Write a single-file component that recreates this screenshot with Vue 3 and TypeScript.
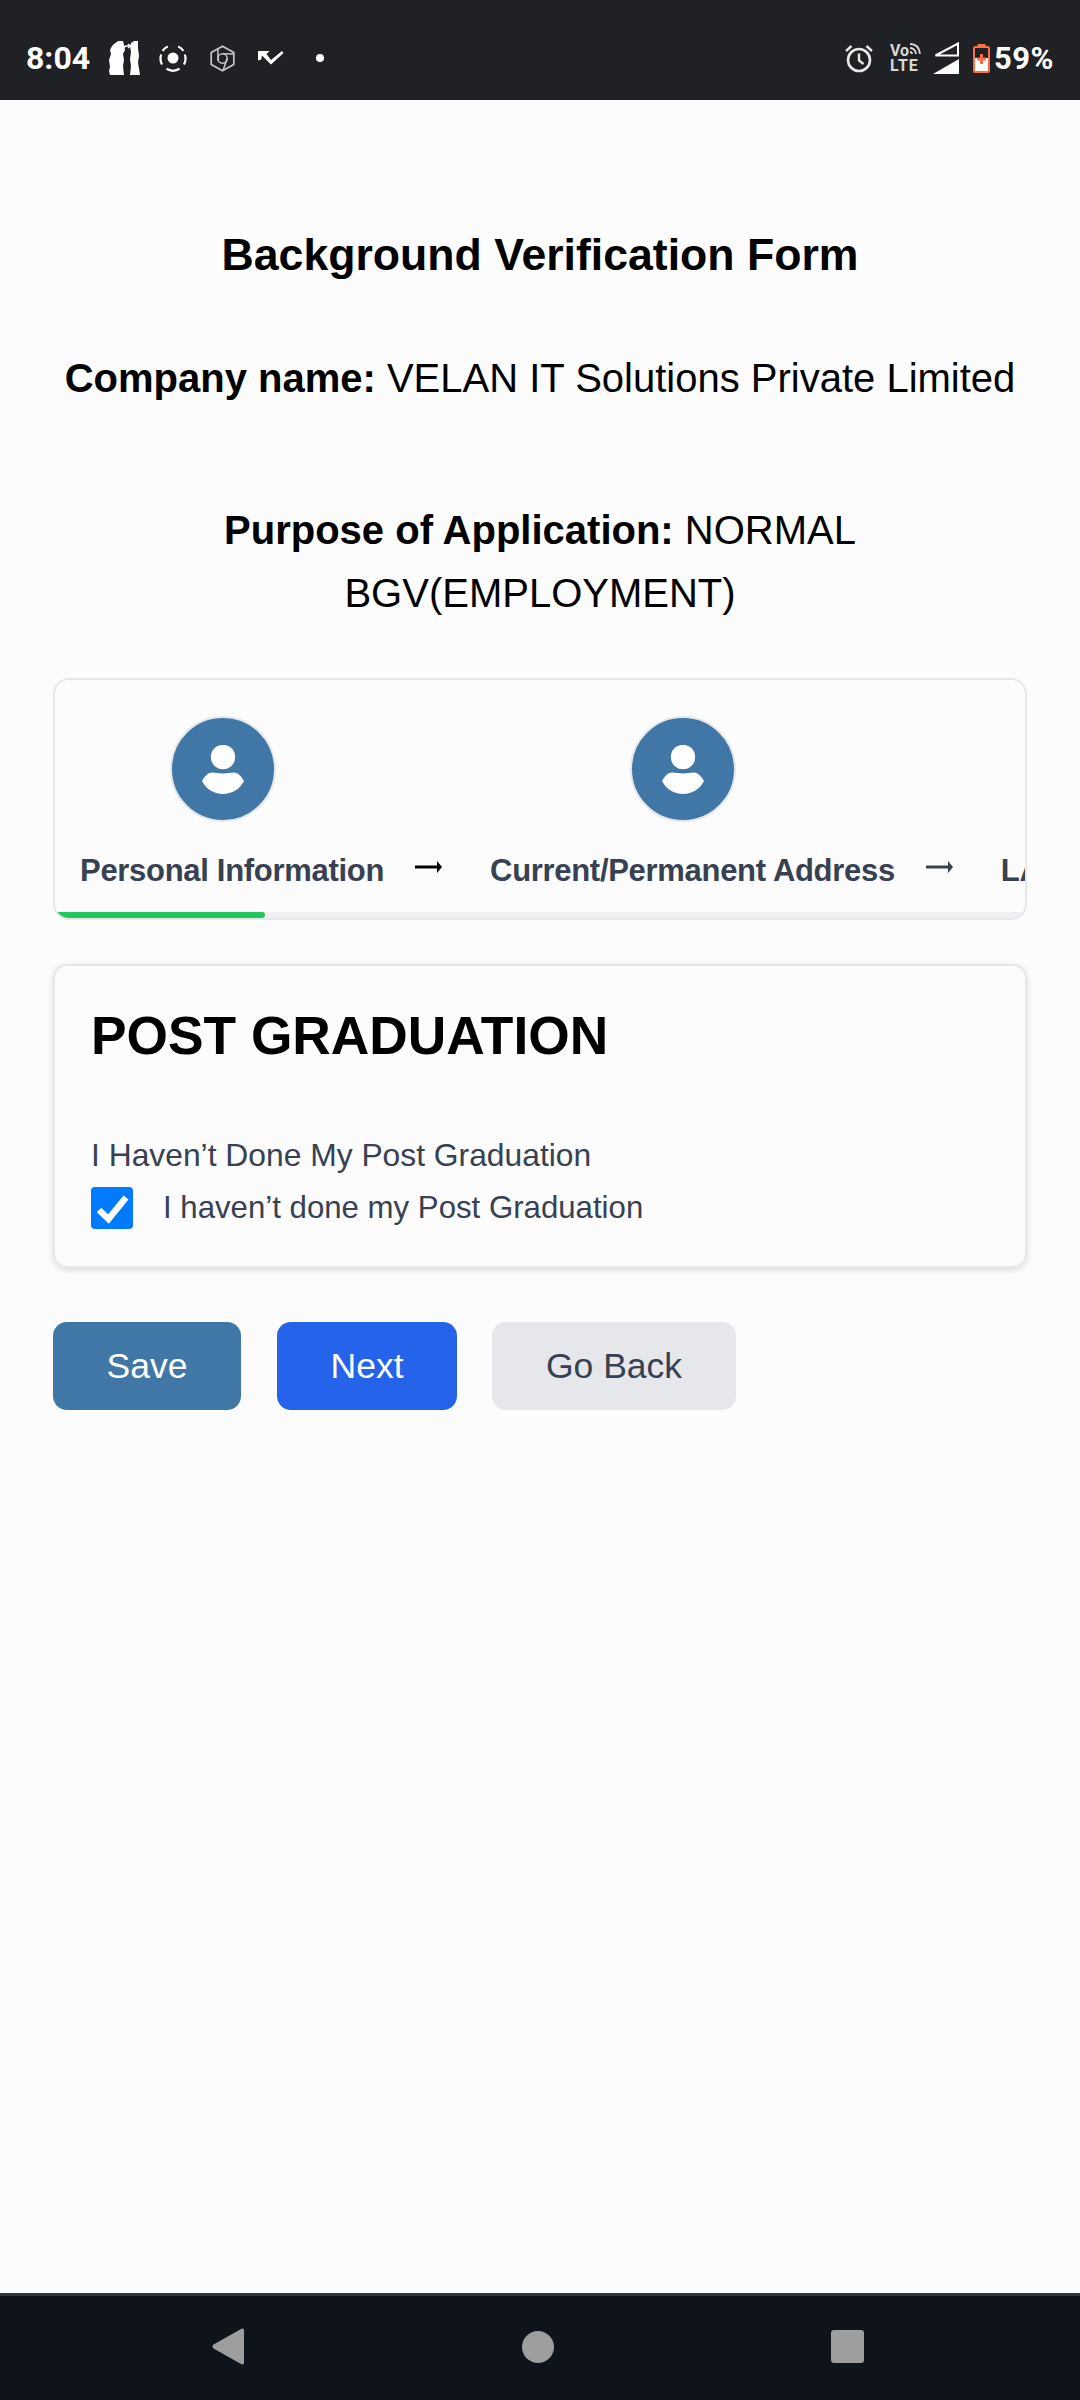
<script setup lang="ts">
const steps = [
  { label: 'Personal Information', arrowDark: true },
  { label: 'Current/Permanent Address', arrowDark: false },
];
</script>

<template>
  <div class="screen">
    <div class="status-bar">
      <div class="status-left">
        <span class="time">8:04</span>
        <svg class="ic-bottles" width="31" height="34" viewBox="0 0 31 34">
          <path d="M5 3 9 0h5l1 4 1 5-2 4 1 6-1 6 1 9H1l-1-4 1-4-1-7 2-6-1-4 2-4z" fill="#fff" />
          <path d="M22 2l3-2h4l0 7 1 8-1 6 2 13h-10l1-9-1-7 1-7-1-6z" fill="#fff" />
          <path d="M14 7q3-3 7-2M19 3l2 2-2 2" fill="none" stroke="#fff" stroke-width="1.4" />
        </svg>
        <svg class="ic-target" width="28" height="28" viewBox="0 0 28 28">
          <circle cx="14" cy="14" r="5.5" fill="#fff" />
          <path d="M3.6 6.800A12.500 12.500 0 0 1 8.800 2.600M19.200 2.600A12.500 12.500 0 0 1 24.400 6.800M25.800 10.500A12.500 12.500 0 0 1 25 20.500M20.500 24.800A12.500 12.500 0 0 1 7.500 24.800M3 20.500A12.500 12.500 0 0 1 2.200 10.500" fill="none" stroke="#fff" stroke-width="2.2" />
        </svg>
        <svg class="ic-hex" width="25" height="27" viewBox="0 0 25 27">
          <path d="M12.500 1.200 23.800 7.500V19.500L12.500 25.800 1.200 19.500V7.500Z" fill="none" stroke="#c8c8c8" stroke-width="1.7" stroke-linejoin="round" />
          <circle cx="12.500" cy="13.500" r="4.700" fill="none" stroke="#c8c8c8" stroke-width="1.500" />
          <path d="M8 3.800Q7.500 10 8.500 15.500M23.500 9 13 8.800M13 25.500 17 14" fill="none" stroke="#c8c8c8" stroke-width="1.500" />
        </svg>
        <svg class="ic-check" width="26" height="16" viewBox="0 0 26 16">
          <path d="M0 1h11.500L8.500 4 13 10 24 1 25.500 3 13 14.500 4 5.500 3.200 9.500 0 10.500Z" fill="#fff" />
        </svg>
        <span class="dot"></span>
      </div>
      <div class="status-right">
        <svg class="ic-alarm" width="28" height="29" viewBox="0 0 28 29">
          <circle cx="14" cy="16" r="11" fill="none" stroke="#e8e8e8" stroke-width="2.6" />
          <path d="M14 9.500v7l4.500 3.500M1 7 6.500 2M27 7 21.500 2" fill="none" stroke="#e8e8e8" stroke-width="2.4" />
        </svg>
        <div class="volte">
          <div class="vo">Vo<svg width="12" height="11" viewBox="0 0 12 11"><path d="M1 1q9 0 10 10M1 5q5 0 6 6M1 9q2 0 2 2" fill="none" stroke="#d8d8d8" stroke-width="1.8" /></svg></div>
          <div class="lte">LTE</div>
        </div>
        <svg class="ic-signal" width="26" height="32" viewBox="0 0 26 32">
          <path d="M25 1.500V13.500H2.500Z" fill="none" stroke="#fff" stroke-width="2" />
          <path d="M26 17V32H0Z" fill="#fff" />
        </svg>
        <svg class="ic-batt" width="17" height="29" viewBox="0 0 17 29">
          <rect x="4.500" y="0" width="8" height="3" fill="#ff6d42" />
          <rect x="1" y="3" width="15" height="25" rx="1.500" fill="#202124" stroke="#ff6d42" stroke-width="2" />
          <rect x="2" y="14" width="13" height="13" fill="#fff" />
          <path d="M8.500 10v10M4 15h9" stroke="#ff6d42" stroke-width="3" />
        </svg>
        <span class="percent">59%</span>
      </div>
    </div>

    <main class="content">
      <h1 class="title">Background Verification Form</h1>
      <p class="company"><b>Company name:</b> VELAN IT Solutions Private Limited</p>
      <p class="purpose"><b>Purpose of Application:</b> NORMAL BGV(EMPLOYMENT)</p>

      <section class="stepper">
        <div class="steps">
          <template v-for="step in steps" :key="step.label">
            <div class="step">
              <div class="avatar">
                <svg width="42" height="49" viewBox="0 0 42 49">
                  <circle cx="21" cy="12" r="12.200" fill="#fff" />
                  <path d="M0 36C3 31 6 27.500 10 27.500C14 27.500 17 28.500 21 28.500C25 28.500 28 27.500 32 27.500C36 27.500 39 31 42 36C38 44 30 49 21 49C12 49 4 44 0 36Z" fill="#fff" />
                </svg>
              </div>
              <span class="step-label">{{ step.label }}</span>
            </div>
            <svg class="arrow" :class="{ dark: step.arrowDark }" width="27" height="12" viewBox="0 0 27 12">
              <path d="M0 4.500h22V0l5 6-5 6V7.500H0Z" fill="currentColor" />
            </svg>
          </template>
          <span class="step-label cut">LAST EMPLOYMENT</span>
        </div>
        <div class="track"><div class="fill"></div></div>
      </section>

      <section class="card">
        <h2 class="card-title">POST GRADUATION</h2>
        <div class="field-label">I Haven’t Done My Post Graduation</div>
        <label class="check-row">
          <span class="check-box">
            <input type="checkbox" class="check" checked />
            <svg class="tick" width="42" height="42" viewBox="0 0 42 42">
              <path d="M8 23 17.500 32 35 10.500" fill="none" stroke="#fff" stroke-width="6.500" />
            </svg>
          </span>
          <span>I haven’t done my Post Graduation</span>
        </label>
      </section>

      <div class="actions">
        <button class="btn save">Save</button>
        <button class="btn next">Next</button>
        <button class="btn back">Go Back</button>
      </div>
    </main>

    <nav class="nav-bar">
      <svg width="32" height="37" viewBox="0 0 32 37"><path d="M29.500 0.800Q32 -0.500 32 2.500V34.500Q32 37.500 29.500 36.200L1.500 20.500Q-0.500 18.500 1.500 16.500Z" fill="#9e9e9e" /></svg>
      <span class="home"></span>
      <span class="recent"></span>
    </nav>
  </div>
</template>

<style scoped>
.screen {
  width: 1080px;
  height: 2400px;
  display: flex;
  flex-direction: column;
  background: #fcfcfc;
  font-family: 'Liberation Sans', Arial, sans-serif;
  color: #000;
  overflow: hidden;
}

.status-bar {
  height: 100px;
  flex: none;
  background: #202124;
  display: flex;
  justify-content: space-between;
  align-items: center;
  padding: 16px 26px 0;
  box-sizing: border-box;
}

.status-left,
.status-right {
  display: flex;
  align-items: center;
}

.time {
  font-family: Roboto, sans-serif;
  font-weight: 700;
  font-size: 32px;
  color: #fff;
  width: 83px;
}

.ic-target { margin-left: 19px; }
.ic-hex { margin-left: 23px; }
.ic-check { margin-left: 23px; }

.dot {
  width: 8px;
  height: 8px;
  border-radius: 50%;
  background: #fff;
  margin-left: 32px;
}

.volte {
  margin-left: 17px;
  width: 32px;
  color: #d8d8d8;
  font-family: Roboto, sans-serif;
  font-weight: 700;
  font-size: 16px;
  line-height: 15px;
}

.vo {
  display: flex;
  align-items: flex-start;
  white-space: nowrap;
}

.lte {
  letter-spacing: 1px;
}

.ic-signal { margin-left: 11px; }
.ic-batt { margin-left: 14px; }

.percent {
  font-family: Roboto, sans-serif;
  font-weight: 700;
  font-size: 31px;
  letter-spacing: 0.5px;
  color: #fff;
  margin-left: 4px;
}

.content {
  flex: 1;
  padding: 0 53px;
}

.title {
  margin: 127px 0 0;
  font-size: 44.6px;
  line-height: 56px;
  font-weight: 700;
  text-align: center;
}

.company,
.purpose {
  margin: 0;
  font-size: 40px;
  line-height: 63px;
  text-align: center;
}

.company {
  margin: 64px -10px 0;
}

.purpose {
  margin: 89px 100px 0;
}

.stepper {
  margin-top: 53px;
  height: 242px;
  box-sizing: border-box;
  border: 2px solid #e5e7eb;
  border-radius: 16px;
  overflow: hidden;
  position: relative;
}

.steps {
  display: flex;
  align-items: flex-end;
  padding: 36px 0 0 25px;
  white-space: nowrap;
}

.step {
  flex: none;
  display: flex;
  flex-direction: column;
  align-items: center;
}

.avatar {
  width: 106px;
  height: 106px;
  margin-right: 18px;
  box-sizing: border-box;
  border: 2px solid #e5e7eb;
  border-radius: 50%;
  background: #4077a6;
  display: flex;
  align-items: center;
  justify-content: center;
}

.step-label {
  margin-top: 29px;
  font-size: 31px;
  line-height: 40px;
  font-weight: 700;
  letter-spacing: -0.3px;
  color: #374151;
}

.cut {
  flex: none;
  margin-top: 0;
}

.arrow {
  flex: none;
  margin: 0 48px 18px 31px;
  color: #374151;
}

.arrow.dark {
  color: #000;
}

.track {
  position: absolute;
  left: 0;
  right: 0;
  bottom: 0;
  height: 6px;
  background: #f0f0f2;
}

.fill {
  width: 210px;
  height: 6px;
  border-radius: 3px;
  background: #22c55e;
}

.card {
  margin-top: 44px;
  height: 304px;
  box-sizing: border-box;
  border: 2px solid #e5e7eb;
  border-radius: 14px;
  box-shadow: 0 2px 6px rgba(0, 0, 0, 0.14);
  padding: 37px 36px 0;
}

.card-title {
  margin: 0;
  font-size: 53.3px;
  line-height: 66px;
  font-weight: 700;
}

.field-label {
  margin-top: 64px;
  font-size: 31.8px;
  line-height: 44px;
  color: #374151;
}

.check-row {
  display: flex;
  align-items: center;
  margin-top: 10px;
  font-size: 31.2px;
  color: #374151;
}

.check-box {
  position: relative;
  width: 42px;
  height: 42px;
  margin-right: 30px;
}

.check {
  appearance: none;
  display: block;
  width: 42px;
  height: 42px;
  margin: 0;
  border-radius: 4px;
  background: #007bff;
}

.tick {
  position: absolute;
  left: 0;
  top: 0;
}

.actions {
  display: flex;
  margin-top: 54px;
}

.btn {
  height: 88px;
  border: none;
  border-radius: 14px;
  font-family: inherit;
  font-size: 35.5px;
  padding: 0;
}

.save {
  width: 188px;
  background: #4077a6;
  color: #fff;
}

.next {
  width: 180px;
  margin-left: 36px;
  background: #2563eb;
  color: #fff;
}

.back {
  width: 244px;
  margin-left: 35px;
  background: #e5e7eb;
  color: #374151;
}

.nav-bar {
  height: 107px;
  flex: none;
  box-sizing: border-box;
  border-top: 3px solid #30353b;
  background: #0f141a;
  display: grid;
  grid-template-columns: 1fr auto 1fr;
  align-items: center;
  justify-items: center;
  padding: 0 216px 3px 212px;
}

.nav-bar svg {
  justify-self: start;
}

.home {
  width: 32px;
  height: 32px;
  border-radius: 50%;
  background: #9e9e9e;
}

.recent {
  justify-self: end;
  width: 33px;
  height: 33px;
  border-radius: 3px;
  background: #9e9e9e;
}
</style>

<style>
html,
body {
  margin: 0;
  background: #fcfcfc;
}
</style>
